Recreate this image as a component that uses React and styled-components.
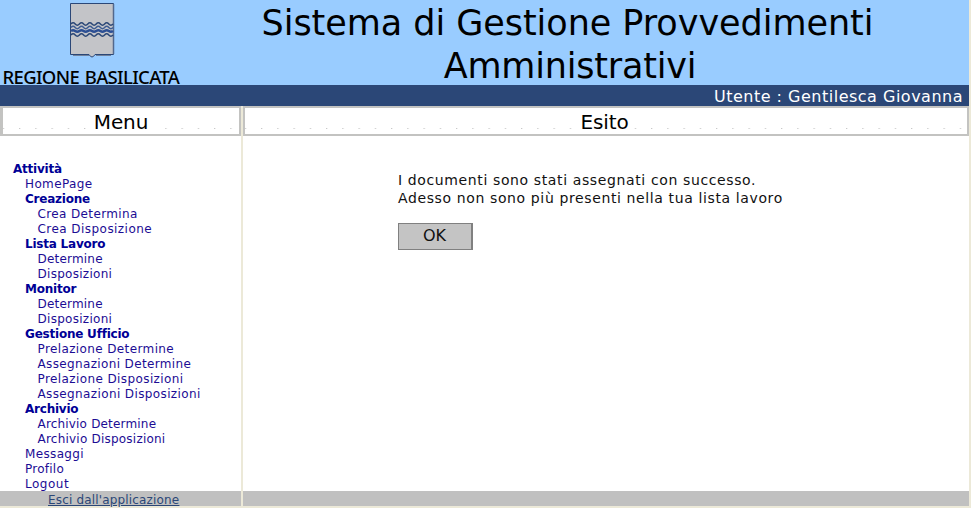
import React from "react";
import styled, { createGlobalStyle } from "styled-components";

const GlobalStyle = createGlobalStyle`
  body {
    margin: 0;
    background: #fff;
    font-family: "DejaVu Sans", Verdana, sans-serif;
    color: #000;
  }
`;

const Page = styled.div`
  box-sizing: border-box;
  width: 971px;
  height: 508px;
  display: flex;
  flex-direction: column;
  border-right: 2px solid #ece9d8;
  border-bottom: 2px solid #ece9d8;
`;

const Banner = styled.header`
  display: flex;
  flex: none;
  height: 85px;
  background: #99ccff;
`;

const Brand = styled.div`
  width: 183px;
  flex: none;
  display: flex;
  flex-direction: column;
  padding-top: 2px;
`;

const Crest = styled.svg`
  display: block;
  flex: none;
  width: 46px;
  height: 57px;
  margin-left: 69px;
`;

const BrandName = styled.div`
  flex: none;
  margin: 10px 0 0 2.5px;
  font: 500 18.5px/16px "Noto Sans", sans-serif;
  letter-spacing: -0.66px;
  word-spacing: 1.5px;
  white-space: nowrap;
`;

const Title = styled.h1`
  flex: 1;
  margin: 0;
  padding: 2px 12px 0 0;
  font-size: 35px;
  font-weight: 400;
  line-height: 43px;
  text-align: center;
  height: 83px;
`;

const TitleLine = styled.span`
  display: block;
  letter-spacing: ${(p) => p.$spacing}px;
  padding-right: ${(p) => p.$shift}px;
`;

const UserBar = styled.div`
  flex: none;
  height: 21px;
  background: #2b4777;
  color: #fff;
  font-size: 16px;
  line-height: 24px;
  letter-spacing: 0.5px;
  text-align: right;
  padding-right: 6px;
  white-space: nowrap;
`;

const Body = styled.div`
  flex: 1;
  min-height: 0;
  display: grid;
  grid-template-columns: 241px 1fr;
  grid-template-rows: 400px;
`;

const Column = styled.section`
  display: flex;
  flex-direction: column;
  min-width: 0;
`;

const MainColumn = styled(Column)`
  border-left: 2px solid #ece9d8;
`;

const PanelHeading = styled.h2`
  box-sizing: border-box;
  flex: none;
  height: 30px;
  margin: 0;
  border: 2px solid #c3c3c1;
  border-left-width: ${(p) => p.$left}px;
  background: radial-gradient(circle at 0.5px 0.5px, #c8c8c8 0.8px, transparent 1px) 16px 20px / 16.25px 30px repeat-x #fff;
  display: flex;
  justify-content: center;
  padding-right: ${(p) => p.$nudge}px;
  font-size: 20px;
  font-weight: 400;
  line-height: 28px;
`;

const HeadingText = styled.span`
  height: 26px;
  padding: 0 5px;
  background: #fff;
  letter-spacing: -0.1px;
`;

const Menu = styled.nav`
  flex: 1 1 0;
  min-height: 0;
  padding-top: 25px;
`;

const MenuItem = styled.a`
  display: block;
  height: 15px;
  padding-left: ${(p) => [13, 25, 37.5][p.$level]}px;
  color: ${(p) => (p.$group ? "#000096" : "#1c0c94")};
  font-size: 12px;
  font-weight: ${(p) => (p.$group ? 700 : 400)};
  line-height: 17px;
  letter-spacing: ${(p) => (p.$group ? -0.22 : p.$spacing)}px;
  text-decoration: none;
  white-space: nowrap;
`;

const Footer = styled.footer`
  flex: none;
  height: 15px;
  background: #c0c0c0;
`;

const ExitLink = styled.a`
  display: block;
  padding-left: 48px;
  color: #2b4777;
  font-size: 12px;
  line-height: 18px;
  letter-spacing: 0.17px;
  text-decoration: underline;
  text-underline-offset: 1px;
`;

const Content = styled.main`
  flex: 1;
  padding: 35px 0 0 155px;
`;

const Message = styled.p`
  margin: 0;
  font-size: 14px;
  line-height: 18px;
  letter-spacing: 0.62px;
  color: #111;
  white-space: nowrap;
`;

const OkButton = styled.button`
  box-sizing: border-box;
  display: block;
  width: 75px;
  height: 27px;
  margin-top: 16px;
  padding: 0 1px 1px 0;
  border: 1px solid #808080;
  border-right-width: 2px;
  border-radius: 0;
  background: #c4c4c4;
  color: #111;
  font: 16px/24px "DejaVu Sans", Verdana, sans-serif;
`;

const items = [
  ["Attività", 0, true],
  ["HomePage", 1, false, 0.37],
  ["Creazione", 1, true],
  ["Crea Determina", 2, false, 0.37],
  ["Crea Disposizione", 2, false, 0.45],
  ["Lista Lavoro", 1, true],
  ["Determine", 2, false, 0.2],
  ["Disposizioni", 2, false, 0.28],
  ["Monitor", 1, true],
  ["Determine", 2, false, 0.2],
  ["Disposizioni", 2, false, 0.28],
  ["Gestione Ufficio", 1, true],
  ["Prelazione Determine", 2, false, 0.38],
  ["Assegnazioni Determine", 2, false, 0.36],
  ["Prelazione Disposizioni", 2, false, 0.4],
  ["Assegnazioni Disposizioni", 2, false, 0.38],
  ["Archivio", 1, true],
  ["Archivio Determine", 2, false, 0.18],
  ["Archivio Disposizioni", 2, false, 0.22],
  ["Messaggi", 1, false, 0.35],
  ["Profilo", 1, false, 0.25],
  ["Logout", 1, false, 0.5],
];

const waves = (y, h) =>
  `M2 ${y}` + Array.from({ length: 5 }, () => `q2.1 ${-h} 4.2 0t4.2 0`).join("");

export default function App() {
  return (
    <>
      <GlobalStyle />
      <Page>
        <Banner>
          <Brand>
            <Crest viewBox="0 0 46 57" fill="none">
              <path d="M1.5 1.5h43v51H26q-1.5 2.5-3 2.5t-3-2.5H1.5z" fill="#c3c4c8" stroke="#2b4777" />
              <path d="M4 53.5h16M27 53.5h15" stroke="#6f809b" />
              <path d="M44.5 2v50" stroke="#53688c" strokeWidth="1.5" />
              <path d={waves(22, 2.4)} stroke="#2b4777" strokeWidth="1.5" />
              <path d={waves(25.5, 2.4)} stroke="#3f5d92" strokeWidth="1.4" />
              <path d={waves(29, 1.5)} stroke="#2c4f94" strokeWidth="2.6" />
              <path d={waves(33, 2.4)} stroke="#2b4777" strokeWidth="1.5" />
            </Crest>
            <BrandName>REGIONE BASILICATA</BrandName>
          </Brand>
          <Title>
            <TitleLine $spacing={-0.05} $shift={5}>Sistema di Gestione Provvedimenti</TitleLine>
            <TitleLine $spacing={-0.2} $shift={0}>Amministrativi</TitleLine>
          </Title>
        </Banner>
        <UserBar>Utente : Gentilesca Giovanna</UserBar>
        <Body>
          <Column>
            <PanelHeading $left={3} $nudge={0}>
              <HeadingText>Menu</HeadingText>
            </PanelHeading>
            <Menu>
              {items.map(([label, level, group, spacing], i) => (
                <MenuItem key={i} $level={level} $group={group} $spacing={spacing}>
                  {label}
                </MenuItem>
              ))}
            </Menu>
            <Footer>
              <ExitLink>Esci dall'applicazione</ExitLink>
            </Footer>
          </Column>
          <MainColumn>
            <PanelHeading $left={2} $nudge={3}>
              <HeadingText>Esito</HeadingText>
            </PanelHeading>
            <Content>
              <Message>
                I documenti sono stati assegnati con successo.
                <br />
                Adesso non sono più presenti nella tua lista lavoro
              </Message>
              <OkButton>OK</OkButton>
            </Content>
            <Footer />
          </MainColumn>
        </Body>
      </Page>
    </>
  );
}
